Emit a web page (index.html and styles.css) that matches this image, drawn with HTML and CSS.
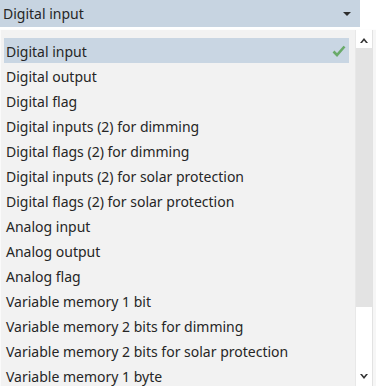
FILE: index.html
```html
<!DOCTYPE html>
<html lang="en">
<head>
    <meta charset="UTF-8">
    <link rel="stylesheet" href="styles.css">
</head>
<body>
    <div class="combo">
        <span class="combo-value">Digital input</span>
        <span class="combo-arrow"></span>
    </div>
    <div class="popup">
        <ul class="option-list">
            <li class="option selected">Digital input
                <svg class="check" width="14" height="12" viewBox="0 0 14 12">
                    <path d="M1.5 6.5 L5 10 L12.5 1.5" fill="none" stroke="#69aa69" stroke-width="2.6"/>
                </svg>
            </li>
            <li class="option">Digital output</li>
            <li class="option">Digital flag</li>
            <li class="option">Digital inputs (2) for dimming</li>
            <li class="option">Digital flags (2) for dimming</li>
            <li class="option">Digital inputs (2) for solar protection</li>
            <li class="option">Digital flags (2) for solar protection</li>
            <li class="option">Analog input</li>
            <li class="option">Analog output</li>
            <li class="option">Analog flag</li>
            <li class="option">Variable memory 1 bit</li>
            <li class="option">Variable memory 2 bits for dimming</li>
            <li class="option">Variable memory 2 bits for solar protection</li>
            <li class="option">Variable memory 1 byte</li>
        </ul>
        <div class="scrollbar">
            <svg class="scroll-btn" width="10" height="8" viewBox="0 0 10 8">
                <path d="M1 7 L5 2 L9 7 L7 7 L5 4.5 L3 7 Z" fill="#333"/>
            </svg>
            <div class="scroll-thumb"></div>
            <div class="scroll-track"></div>
            <svg class="scroll-btn" width="10" height="8" viewBox="0 0 10 8">
                <path d="M1 1 L5 6 L9 1 L7 1 L5 3.5 L3 1 Z" fill="#333"/>
            </svg>
        </div>
        <div class="behind"></div>
    </div>
</body>
</html>
```

FILE: styles.css
```css
body {
    margin: 0;
    padding: 0;
    background: #ffffff;
    font-family: "Noto Sans", "Open Sans", sans-serif;
    color: #262626;
    height: 386px;
    overflow: hidden;
}

.combo {
    width: 360px;
    height: 27px;
    box-sizing: border-box;
    padding: 0 9px 0 3px;
    background: #c7d4e1;
    display: flex;
    align-items: center;
    justify-content: space-between;
    font-size: 14px;
}

.combo-arrow {
    width: 0;
    height: 0;
    border-left: 4px solid transparent;
    border-right: 4px solid transparent;
    border-top: 4px solid #2e2e2e;
}

.popup {
    display: flex;
    margin-top: 2px;
    border-top: 1px solid #fdfdfd;
    height: 356px;
}

.option-list {
    list-style: none;
    margin: 0;
    padding: 8px 6px 0 3px;
    width: 356px;
    box-sizing: border-box;
    background: #f2f2f2;
    border-left: 1px solid #fafafa;
}

.option {
    height: 25px;
    display: flex;
    align-items: center;
    justify-content: space-between;
    padding: 1px 3px 0 2px;
    box-sizing: border-box;
    font-size: 14px;
    white-space: nowrap;
}

.option.selected {
    background: #c9d6e3;
}

.scrollbar {
    width: 16px;
    background: #ffffff;
    border-left: 1px solid #e8e8e8;
    display: flex;
    flex-direction: column;
    align-items: center;
}

.scroll-btn {
    margin: 6px 0 4px;
}

.scroll-thumb {
    align-self: stretch;
    height: 259px;
    background: #e3e3e3;
}

.scroll-track {
    flex: 1;
}

.scroll-btn:last-child {
    margin: 0 0 5px;
}

.behind {
    width: 3px;
    background: #f6f6f6;
    border-left: 1px solid #e2e2e2;
}
```
